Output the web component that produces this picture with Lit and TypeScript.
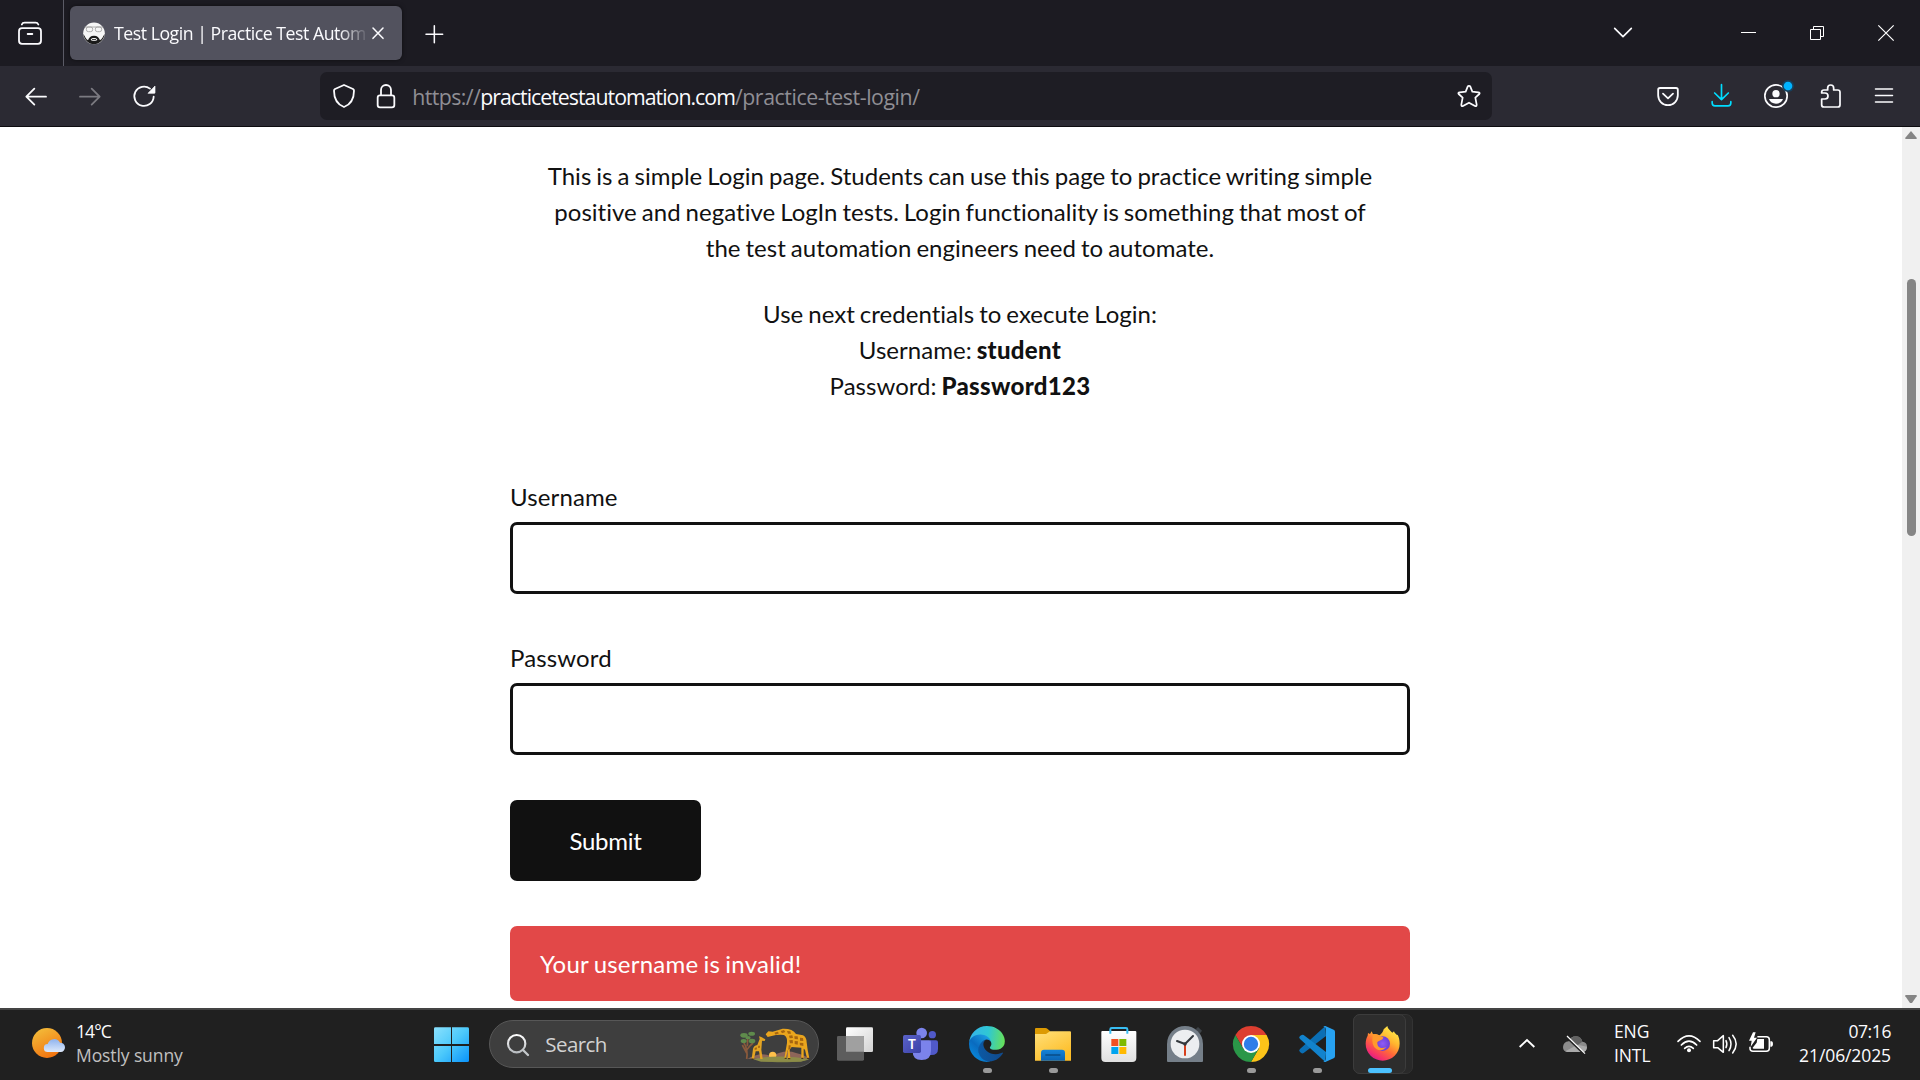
import { LitElement, html, css, svg, type TemplateResult } from "lit";
import { customElement } from "lit/decorators.js";

/* Icons are drawn on a grid of three units to the pixel. */
const pic = (x: number, y: number, w: number, h: number, body: TemplateResult) => html`
  <svg class="pic" width=${w / 3} height=${h / 3} viewBox="${x} ${y} ${w} ${h}" fill="none">${body}</svg>`;

const firefoxView = svg`<g stroke="#fbfbfe" stroke-width="5.4" stroke-linecap="round">
  <rect x="57" y="84.5" width="66" height="47" rx="9"/><path d="M65.5 73.5C67 69 70 68 74 68H107C111 68 113 69 115 73.5M83 102H97"/></g>`;
const closeTab = svg`<path d="M1119 84L1149 115M1149 84L1119 115" stroke="#fbfbfe" stroke-width="4.6" stroke-linecap="round"/>`;
const plus = svg`<path d="M1303 77V128M1278 102.5H1328" stroke="#fbfbfe" stroke-width="4.6" stroke-linecap="round"/>`;
const favicon = svg`<circle cx="282" cy="100" r="32.5" fill="#f6f6f6"/>
  <path d="M250 102C252 120 266 132.500 282 132.500S312 120 314 102C309 109 306 118 300 121C297 113 292 107 282 107S267 113 264 121C258 118 255 109 250 102Z" fill="#1b1b1b"/>
  <path d="M272 119C273 112 291 112 292 119C289 124 275 124 272 119Z" fill="#f0f0f0"/><path d="M276 119H288" stroke="#222" stroke-width="3"/>
  <g stroke="#9c9c9c" stroke-width="2.4"><path d="M254 81H310"/><rect x="259" y="81" width="19" height="14" rx="6"/><rect x="286" y="81" width="19" height="14" rx="6"/></g>`;
const chevDown = svg`<path d="M644 85L669 110L694 85" stroke="#fbfbfe" stroke-width="5"  stroke-linecap="round" stroke-linejoin="round"/>`;
const winMin = svg`<rect x="1023" y="96" width="45" height="3" fill="#fff"/>`;
const winRestore = svg`<path d="M1231.5 88.5H1261.5V118.5H1231.5ZM1240.5 88V79.5H1270.5V109.5H1262" stroke="#fff" stroke-width="3"/>`;
const winClose = svg`<path d="M1435 76L1481 122M1481 76L1435 122" stroke="#fff" stroke-width="3.6"/>`;

const back = svg`<path d="M138 290H80M103 266L79 290L103 314" stroke="#fbfbfe" stroke-width="5.4" stroke-linecap="round" stroke-linejoin="round"/>`;
const forward = svg`<path d="M240 290H298M275 266L299 290L275 314" stroke="#7b7a81" stroke-width="5.4" stroke-linecap="round" stroke-linejoin="round"/>`;
const reload = svg`<path d="M461 290A29 29 0 1 1 450 266" stroke="#fbfbfe" stroke-width="5.4" stroke-linecap="round"/><path d="M465 258V278Q465 280 463 280H444Z" fill="#fbfbfe" stroke="#fbfbfe" stroke-width="2" stroke-linejoin="round"/>`;
const shield = svg`<path d="M1032 255L1059 267Q1062 269 1062 272C1062 297 1052 313 1032 321C1012 313 1002 297 1002 272Q1002 269 1005 267Z" stroke="#fbfbfe" stroke-width="5.4" stroke-linejoin="round"/>`;
const lock = svg`<g stroke="#fbfbfe" stroke-width="5.4"><rect x="1133" y="286" width="50" height="36" rx="7"/><path d="M1143 286V270A15 15 0 0 1 1173 270V286"/></g>`;
const star = svg`<path d="M207 257.5Q210 257.5 211 260L217 275L235 277Q241 278 238 282L226 293L230 314Q230 320 225 318L207 308L189 318Q184 320 184 314L188 293L176 282Q173 278 179 277L197 275L203 260Q204 257.5 207 257.5Z" stroke="#fbfbfe" stroke-width="5.2" stroke-linejoin="round"/>`;
const pocket = svg`<g stroke="#fbfbfe" stroke-width="5.4" stroke-linecap="round" stroke-linejoin="round"><path d="M780 264H828Q833.5 264 833.5 269.5V286A29.5 29.5 0 0 1 774.5 286V269.5Q774.5 264 780 264Z"/><path d="M789 281L804 295L819 281"/></g>`;
const download = svg`<g stroke="#00ddff" stroke-width="5" stroke-linecap="round" stroke-linejoin="round"><path d="M964.5 254V298M944 279L964.5 299L985 279M936.5 305V309Q936.5 317.5 945 317.5H984Q992.5 317.5 992.5 309V305"/></g>`;
const account = svg`<circle cx="1128" cy="288" r="33.5" stroke="#fbfbfe" stroke-width="5"/><circle cx="1128" cy="281" r="11" fill="#fbfbfe"/><path d="M1107 297H1149C1146 306 1138 311 1128 311S1110 306 1107 297Z" fill="#fbfbfe"/><circle cx="1164" cy="258" r="18" fill="#16405d"/><circle cx="1164" cy="258" r="13" fill="#00b3ff"/>`;
const puzzle = svg`<path d="M1265 297H1275A9 9 0 0 0 1275 279H1265V277Q1265 270 1272 270H1283V264A9 9 0 0 1 1301 264V270H1313Q1320 270 1320 277V314Q1320 321 1313 321H1272Q1265 321 1265 314Z" stroke="#fbfbfe" stroke-width="5.2" stroke-linejoin="round"/>`;
const menu = svg`<path d="M1426.5 267H1477.5M1426.5 286.5H1477.5M1426.5 306H1477.5" stroke="#fbfbfe" stroke-width="4.6" stroke-linecap="round"/>`;
const scrollUp = svg`<path d="M1533 393L1550 413V417H1516V413Z" fill="#858585"/>`;
const scrollDown = svg`<path d="M1246 1025H1280V1029L1266 1049H1260L1246 1029Z" fill="#858585"/>`;

const weather = svg`<defs>
  <linearGradient id="sun" x1="0.2" y1="0" x2="0.7" y2="1"><stop offset="0" stop-color="#f3bd3a"/><stop offset="1" stop-color="#f1700e"/></linearGradient>
  <linearGradient id="cl" x1="0" y1="0" x2="0" y2="1"><stop offset="0" stop-color="#8fb3ee"/><stop offset="1" stop-color="#dde9fb"/></linearGradient></defs>
  <circle cx="141" cy="129" r="45" fill="url(#sun)"/>
  <path d="M144 156A12 12 0 0 1 143 132A20 20 0 0 1 180 128A14 14 0 0 1 182 156Z" fill="url(#cl)"/>`;
const start = svg`<defs><linearGradient id="w" gradientUnits="userSpaceOnUse" x1="1302" y1="82" x2="1406" y2="186"><stop offset="0" stop-color="#8be1fd"/><stop offset="0.5" stop-color="#4cc9fb"/><stop offset="1" stop-color="#0a93fb"/></linearGradient></defs>
  <path d="M1306 82H1353V132H1302V86Q1302 82 1306 82ZM1356 82H1402Q1407 82 1407 86V132H1356ZM1302 138H1353V186H1306Q1302 186 1302 182ZM1356 138H1407V182Q1407 186 1402 186H1356Z" fill="url(#w)"/>`;
const magnifier = svg`<defs><linearGradient id="mg" x1="0" y1="0" x2="0" y2="1"><stop offset="0" stop-color="#fff"/><stop offset="1" stop-color="#b9bdc1"/></linearGradient></defs>
  <circle cx="110" cy="128" r="26" stroke="url(#mg)" stroke-width="6.5"/><path d="M129 147L144 162" stroke="#c4c8cb" stroke-width="7" stroke-linecap="round"/>`;
const giraffes = svg`
  <ellipse cx="904" cy="178" rx="78" ry="10" fill="#7d8140"/><path d="M800 177Q840 154 870 170Q912 148 945 160Q975 168 985 177Z" fill="#8d6659"/>
  <circle cx="875" cy="167" r="11" fill="#ffc04a"/><path d="M815 178Q900 163 985 178L960 186H840Z" fill="#8c8c48"/>
  <path d="M797 178Q802 150 788 128M798 150Q806 138 816 130M797 160L784 136M799 140L800 118" stroke="#8a5a3c" stroke-width="5"/>
  <g fill="#5f8b4c"><ellipse cx="789" cy="107" rx="11" ry="7"/><ellipse cx="812" cy="102" rx="10" ry="6"/><ellipse cx="788" cy="124" rx="9" ry="6"/><ellipse cx="813" cy="124" rx="10" ry="7"/><ellipse cx="801" cy="114" rx="8" ry="5"/></g>
  <path d="M812 178L816 148Q818 138 829 136L836 118L834 110L841 112L853 119L851 124L843 123L841 150L845 178H838L834 155H824L819 178Z" fill="#e3a423"/>
  <path d="M854 104L862 95L875 96L905 87Q935 86 945 103L966 107Q976 111 977 128L980 150L985 176H978L972 150L968 147V176H961V144L932 142L926 150L928 177H920L921 150L914 176H910L918 130Q920 112 909 106Q890 104 872 109L860 112Z" fill="#eaa51d"/>
  <path d="M880 99L890 96L894 101L884 105ZM899 94L909 91L913 97L903 101ZM918 94L928 95L930 102L921 102ZM924 108L934 107L936 115L926 116ZM940 110L950 110L951 119L941 118ZM925 122L935 121L936 131L927 131ZM941 124L951 125L950 135L941 133ZM957 114L966 115L967 124L957 123ZM956 129L967 130L967 139L957 137ZM923 137L929 137L928 148L922 150ZM821 145L827 143L828 149L821 151ZM832 138L837 138L836 145L831 144Z" fill="#a66510"/>
  <path d="M911 176H917M921 177H928M961 176H967M978 176H985M812 178H818" stroke="#3c2413" stroke-width="3"/>`;
const taskView = svg`<defs><linearGradient id="tv" x1="0" y1="0" x2="1" y2="1"><stop offset="0" stop-color="#fff"/><stop offset="1" stop-color="#d2d2d2"/></linearGradient></defs>
  <rect x="1098" y="82" width="81" height="74" rx="4" fill="url(#tv)"/><rect x="1071" y="108" width="81" height="74" rx="4" fill="#5d5d5d"/><path d="M1098 108H1149Q1152 108 1152 111V155H1098Z" fill="#a0a0a0"/>`;
const teams = svg`<defs><linearGradient id="tm" x1="0" y1="0" x2="1" y2="1"><stop offset="0" stop-color="#5a62c8"/><stop offset="1" stop-color="#3c42a8"/></linearGradient></defs>
  <circle cx="1357" cy="104" r="11" fill="#5059c9"/><path d="M1350 121H1368Q1374 121 1374 127V147Q1374 165 1354 165H1346Z" fill="#5059c9"/>
  <circle cx="1325" cy="99" r="16" fill="#7b83eb"/><path d="M1298 121H1348Q1353 121 1353 127V152Q1353 180 1325 180T1298 152Z" fill="#7b83eb"/>
  <rect x="1269" y="105" width="54" height="54" rx="5" fill="url(#tm)"/><text x="1296" y="146" text-anchor="middle" font-family="Lato, sans-serif" font-weight="700" font-size="39" fill="#fff">T</text>`;
const edge = svg`<defs>
  <linearGradient id="e1" x1="64" y1="177" x2="241" y2="177" gradientUnits="userSpaceOnUse"><stop offset="0" stop-color="#0c59a4"/><stop offset="1" stop-color="#114a8b"/></linearGradient>
  <linearGradient id="e2" x1="160" y1="100" x2="46" y2="223" gradientUnits="userSpaceOnUse"><stop offset="0" stop-color="#1b9de2"/><stop offset="0.6" stop-color="#0a6bbf"/><stop offset="1" stop-color="#0883d6"/></linearGradient>
  <linearGradient id="e3" x1="10" y1="90" x2="250" y2="120" gradientUnits="userSpaceOnUse"><stop offset="0" stop-color="#35b5e8"/><stop offset="0.5" stop-color="#2fc7d4"/><stop offset="1" stop-color="#66e05a"/></linearGradient></defs>
  <g transform="translate(87 78) scale(.42)">
  <path fill="url(#e1)" d="M235.68 190.72a91.35 91.35 0 0 1-10.45 4.67 101.28 101.28 0 0 1-35.51 6.39c-46.79 0-87.53-32.18-87.53-73.48a31.07 31.07 0 0 1 16.27-27c-42.35 1.78-53.23 45.9-53.23 71.76 0 73.12 67.37 80.52 81.9 80.52 7.85 0 19.67-2.28 26.76-4.52l1.3-.44a128.34 128.34 0 0 0 66.63-52.78 4 4 0 0 0-5.38-5.71z"/>
  <path fill="url(#e2)" d="M105.73 241.42a79.17 79.17 0 0 1-22.74-21.34 80.72 80.72 0 0 1 29.5-120c3.12-1.47 8.45-4.14 15.54-4a32.35 32.35 0 0 1 25.69 13 31.88 31.88 0 0 1 6.36 18.66c0-.21 24.46-79.6-80-79.6-43.9 0-80 41.66-80 78.21a130.15 130.15 0 0 0 12.1 56 128 128 0 0 0 156.4 67.05 75.55 75.55 0 0 1-62.78-8z"/>
  <path fill="url(#e3)" d="M152.29 148.86c-.81 1.06-3.3 2.51-3.3 5.66 0 2.61 1.7 5.11 4.72 7.23 14.38 10 41.49 8.67 41.56 8.67a59.56 59.56 0 0 0 30.27-8.35 61.38 61.38 0 0 0 30.43-52.88c.26-22.41-8-37.31-11.34-43.91-21.19-41.45-66.93-65.28-116.67-65.28a128 128 0 0 0-128 126.2c.48-36.54 36.8-66.05 80-66.05 3.5 0 23.46.34 42 10.07 16.34 8.58 24.9 18.94 30.85 29.21 6.18 10.67 7.28 24.15 7.28 29.52s-2.74 13.33-7.8 19.91z"/></g>`;
const folder = svg`<defs><linearGradient id="f1" x1="0" y1="0" x2="0.6" y2="1"><stop offset="0" stop-color="#ffe07a"/><stop offset="1" stop-color="#fdbd27"/></linearGradient><linearGradient id="f2" x1="0" y1="0" x2="0" y2="1"><stop offset="0" stop-color="#1583d8"/><stop offset="1" stop-color="#0a63b4"/></linearGradient></defs>
  <path d="M285 87Q285 84 288 84H316Q320 84 323 87L330 93V106H285Z" fill="#dc9a02"/>
  <path d="M285 102H318L330 94H390Q393 94 393 97V182H285Z" fill="url(#f1)"/><path d="M303 182V158Q303 149 312 149H366Q375 149 375 158V182Z" fill="url(#f2)"/><path d="M316 165H361" stroke="#08477f" stroke-width="4"/>`;
const store = svg`<defs><linearGradient id="s1" x1="0" y1="0" x2="0" y2="1"><stop offset="0" stop-color="#fff"/><stop offset="1" stop-color="#e0e0e0"/></linearGradient></defs>
  <path d="M483 96Q483 93 486 93H585Q588 93 588 96V174Q588 186 576 186H495Q483 186 483 174Z" fill="url(#s1)"/><path d="M510 101V88Q510 84 514 84H557Q561 84 561 88V101" stroke="#38bdf2" stroke-width="6"/>
  <rect x="513" y="117" width="21" height="21" fill="#f25022"/><rect x="537" y="117" width="21" height="21" fill="#7fba00"/><rect x="513" y="141" width="21" height="21" fill="#00a4ef"/><rect x="537" y="141" width="21" height="21" fill="#ffb900"/>`;
const clock = svg`<path d="M767 88L774 81L786 92L779 101Z" fill="#3d4247"/><path d="M681 132A54 54 0 0 1 789 132V183Q789 186 786 186H684Q681 186 681 183Z" fill="#757f89"/><circle cx="735" cy="132" r="43" fill="#eceef0"/>
  <path d="M735 132V165" stroke="#d8401c" stroke-width="6" stroke-linecap="round"/><path d="M711 123L735 132L759 108" stroke="#33383d" stroke-width="6" stroke-linecap="round"/><circle cx="735" cy="132" r="5" fill="#33383d"/>`;
const chrome = svg`<g transform="translate(933 132)"><path d="M-46.8 -27A54 54 0 0 1 46.8 -27H0L-23.4 13.5Z" fill="#dd3e30"/><path d="M46.8 -27A54 54 0 0 1 0 54L23.4 13.5L0 -27Z" fill="#fcc419"/><path d="M-46.8 -27A54 54 0 0 0 0 54L23.4 13.5H-23.4Z" fill="#2a9748"/><circle r="27" fill="#fff"/><circle r="21.5" fill="#2f7de9"/></g>`;
const vscode = svg`<path d="M1156 78L1080 147Q1075 151 1080 156L1085 160Q1088 161 1091 159L1158 108Z" fill="#0b6fb5"/><path d="M1085 105L1080 108Q1075 112 1080 117L1156 186L1158 156L1091 105Q1088 103 1085 105Z" fill="#1283cd"/><path d="M1156 78L1181 89Q1185 91 1185 95V169Q1185 173 1181 175L1156 186Q1152 186 1150 183Q1158 184 1158 176V88Q1158 80 1150 81Q1152 78 1156 78Z" fill="#27a2f2"/>`;
const firefox = svg`<defs><linearGradient id="ff" x1="0.85" y1="0.05" x2="0.25" y2="1"><stop offset="0" stop-color="#fff04d"/><stop offset="0.35" stop-color="#ffb52e"/><stop offset="0.6" stop-color="#ff6b37"/><stop offset="0.85" stop-color="#f6316a"/><stop offset="1" stop-color="#d6188f"/></linearGradient><radialGradient id="fp"><stop offset="0" stop-color="#8f5cf7"/><stop offset="1" stop-color="#6a3fd6"/></radialGradient></defs>
  <path d="M1343 78C1344 86 1352 92 1358 98L1363 94C1364 100 1370 102 1372 106L1374 104C1378 112 1380 120 1380 131A51 51 0 0 1 1278 131C1278 120 1281 112 1284 107L1285 99L1291 102L1296 94L1300 103Q1310 101 1317 105C1322 108 1330 96 1332 88C1336 84 1340 81 1343 78Z" fill="url(#ff)"/>
  <circle cx="1329" cy="131" r="22" fill="url(#fp)"/><path d="M1300 103Q1312 101 1320 108L1331 112Q1331 119 1319 122L1313 126Q1312 140 1322 143Q1332 146 1340 140Q1328 156 1311 148Q1293 138 1300 103Z" fill="#ff9a2c"/>`;

const trayUp = svg`<path d="M89 201L111 180L133 201" stroke="#fff" stroke-width="5.5"/>`;
const oneDrive = svg`<path d="M232 216Q219 215 219 201Q220 186 236 184Q242 169 258 169Q273 170 277 185Q291 187 291 200Q290 216 277 216Z" fill="#8c8c8c"/><path d="M240 180Q247 168 259 168Q273 170 277 185L262 196Z" fill="#626262"/><path d="M226 214L262 194L291 200Q290 216 277 216H232Z" fill="#aaa"/><path d="M230 172L283 223" stroke="#202020" stroke-width="6"/><path d="M231 168L285 221" stroke="#fff" stroke-width="3.6"/>`;
const wifi = svg`<g stroke="#fff" stroke-width="5" stroke-linecap="round"><path d="M564 184Q597 151 630 184M574 195Q597 172 620 195M584 205Q597 193 610 205"/></g><circle cx="597" cy="211" r="6" fill="#fff"/>`;
const speaker = svg`<g stroke="#fff" stroke-width="4.6" stroke-linecap="round" stroke-linejoin="round"><path d="M671 182H683L700 167V217L683 203H671ZM708 182Q713 192 708 203M717 173Q729 192 717 212M728 166Q749 192 728 219"/></g>`;
const battery = svg`<path d="M802 170H829Q838 170 838 179V205Q838 214 829 214H789Q780 214 780 205V200" stroke="#fff" stroke-width="4.6"/><path d="M802 177H822V206H792Q788 206 788 203L800 188Z" fill="#fff"/><path d="M841 184H845Q849 185 849 192T845 200H841Z" fill="#fff"/><path d="M789 157L777 182H785L782 200L801 173H792L797 157Z" fill="#fff"/>`;

const apps: { x: number; art: TemplateResult; on?: boolean }[] = [
  { x: 42, art: edge, on: true },
  { x: 240, art: folder, on: true },
  { x: 437, art: store },
  { x: 636, art: clock },
  { x: 834, art: chrome, on: true },
  { x: 1032, art: vscode, on: true },
];

@customElement("app-root")
export class AppRoot extends LitElement {
  static styles = css`
    :host { display: flex; flex-direction: column; width: 1920px; height: 1080px; overflow: hidden; background: #fff;
      font-family: "Open Sans", "Noto Sans", sans-serif; color: #fbfbfe; }
    * { box-sizing: border-box; }
    .pic { display: block; flex: none; overflow: visible; }
    .tabs { display: flex; height: 66px; background: #1c1b22; flex: none; }
    .view { width: 64px; border-right: 1px solid #5b5b66; }
    .tab { display: flex; width: 332px; height: 54px; margin: 6px 0 0 6px; border-radius: 6px; background: #52525e; box-shadow: 0 0 4px rgba(0,0,0,.5); }
    .title { width: 256px; flex: none; white-space: nowrap; font-size: 17.7px; line-height: 55px; padding-left: 1px; letter-spacing: -.47px;
      -webkit-mask-image: linear-gradient(90deg, #000 226px, transparent 256px); mask-image: linear-gradient(90deg, #000 226px, transparent 256px); }
    .grow { flex: 1; }
    .gap { width: 68px; }
    .nav { display: flex; height: 61px; background: #2b2a33; border-bottom: 1px solid #0d0c10; flex: none; padding: 0 9px; }
    .url { display: flex; width: 1172px; height: 48px; margin: 6px 149px 0 149px; border-radius: 7px; background: #1e1d24; white-space: nowrap; font-size: 21.3px; line-height: 49px; color: #8f8e94; letter-spacing: -.6px; }
    .link { flex: 1; display: flex; }
    .host { color: #fbfbfe; letter-spacing: -.98px; }
    .path { letter-spacing: -.43px; }
    .body { display: flex; flex: 1; min-height: 0; }
    .page { flex: 1; padding: 31px 0 0 510px; font: 24px/36px Lato, sans-serif; color: #111; font-variant-ligatures: none; word-spacing: -1.15px; }
    .intro { width: 900px; text-align: center; white-space: nowrap; letter-spacing: .02px; }
    .para { margin: 0 0 30px; }
    .strong { font-weight: 900; letter-spacing: .3px; }
    .field { display: block; width: 900px; height: 72px; border: 3px solid #111; border-radius: 7px; background: #fff; margin: 0; outline: 0; }
    .label { display: block; padding-bottom: 7px; letter-spacing: .13px; }
    .form { padding-top: 45px; }
    .second { padding-top: 46px; }
    .submit { display: block; width: 191px; height: 81px; margin: 45px 0; border: 0; border-radius: 7px; background: #111; color: #fff; font: inherit; padding: 0; letter-spacing: -.3px; }
    .error { width: 900px; height: 75px; border-radius: 7px; background: #e24848; color: #fff; padding: 20px 30px; letter-spacing: .22px; }
    .scroll { display: flex; flex-direction: column; align-items: center; width: 18px; background: #f0f0f0; }
    .thumb { width: 9px; height: 257px; border-radius: 5px; background: #858585; margin-top: 134px; }
    .bar { display: flex; flex: none; height: 72px; border-top: 2px solid #444; background: #202020; font-size: 17.5px; line-height: 24px; white-space: nowrap; letter-spacing: -.1px; }
    .two { display: flex; flex-direction: column; padding-top: 9px; }
    .weather { width: 342px; margin-left: -1px; }
    .temp { letter-spacing: -.9px; }
    .dim { color: #c0c0c0; }
    .lang { width: 77px; padding-left: 20px; }
    .search { display: flex; width: 330px; height: 48px; margin: 10px 3px 0 4px; border: 1.5px solid #575757; border-radius: 24px; background: #3e3e3e; color: #d2d2d2; font-size: 20.5px; line-height: 46px; letter-spacing: -.6px; }
    .hint { margin-left: 1px; }
    .app { display: flex; flex-direction: column; align-items: center; width: 66px; }
    .dot { width: 9px; height: 5px; border-radius: 3px; background: #9a9a9a; }
    .active { width: 24px; background: #4cc2ff; }
    .stack { width: 60px; height: 60px; margin: 4px 0 0 3px; border-radius: 7px; background: #292929; border: 1px solid #333; }
    .front { display: flex; flex-direction: column; align-items: center; width: 53px; height: 60px; margin: -1px; border-radius: 7px; background: #2d2d2d; border: 1px solid #3c3c3c; }
    .clock { width: 141px; align-items: flex-end; padding-right: 29px; }
    .time { letter-spacing: -.4px; }
  `;
  render() {
    return html`
      <div class="tabs">
        <div class="view">${pic(0, 0, 189, 198, firefoxView)}</div>
        <div class="tab">${pic(210, 18, 129, 162, favicon)}<div class="title">Test Login | Practice Test Autom</div>${pic(1107, 18, 99, 162, closeTab)}</div>
        ${pic(1206, 0, 198, 198, plus)}<div class="grow"></div>
        ${pic(600, 0, 138, 198, chevDown)}<div class="gap"></div>
        ${pic(942, 0, 207, 198, winMin)}${pic(1149, 0, 207, 198, winRestore)}${pic(1356, 0, 204, 198, winClose)}
      </div>
      <div class="nav">
        ${pic(27, 198, 162, 180, back)}${pic(189, 198, 162, 180, forward)}${pic(351, 198, 162, 180, reload)}
        <div class="url">${pic(960, 216, 144, 144, shield)}${pic(1104, 216, 133, 144, lock)}
          <div class="link"><span>https://</span><span class="host">practicetestautomation.com</span><span class="path">/practice-test-login/</span></div>${pic(138, 216, 138, 144, star)}</div>
        ${pic(723, 198, 162, 180, pocket)}${pic(885, 198, 162, 180, download)}${pic(1047, 198, 162, 180, account)}${pic(1209, 198, 162, 180, puzzle)}${pic(1371, 198, 162, 180, menu)}
      </div>
      <div class="body">
        <main class="page">
          <div class="intro">
            <p class="para">This is a simple Login page. Students can use this page to practice writing simple<br>positive and negative LogIn tests. Login functionality is something that most of<br>the test automation engineers need to automate.</p>
            <p class="para">Use next credentials to execute Login:<br>Username: <b class="strong">student</b><br>Password: <b class="strong">Password123</b></p>
          </div>
          <div class="form">
            <label class="label">Username</label><input class="field">
            <label class="label second">Password</label><input class="field" type="password">
            <button class="submit">Submit</button>
            <div class="error">Your username is invalid!</div>
          </div>
        </main>
        <div class="scroll">${pic(1506, 381, 54, 54, scrollUp)}<div class="thumb"></div><div class="grow"></div>${pic(1236, 1010, 54, 54, scrollDown)}</div>
      </div>
      <div class="bar">
        ${pic(0, 30, 231, 210, weather)}
        <div class="two weather"><span class="temp">14°C</span><span class="dim">Mostly sunny</span></div>
        ${pic(1254, 30, 201, 210, start)}
        <div class="search">${pic(30, 60, 163, 140, magnifier)}<span class="hint">Search</span><div class="grow"></div>${pic(762, 64, 250, 140, giraffes)}</div>
        ${pic(1026, 30, 198, 210, taskView)}${pic(1224, 30, 198, 210, teams)}
        ${apps.map((a) => html`<div class="app">${pic(a.x, 30, 198, 174, a.art)}${a.on ? html`<div class="dot"></div>` : ""}</div>`)}
        <div class="stack"><div class="front">${pic(1240, 45, 158, 159, firefox)}<div class="dot active"></div></div></div>
        <div class="grow"></div>
        ${pic(54, 90, 144, 210, trayUp)}${pic(198, 90, 114, 210, oneDrive)}
        <div class="two lang"><span>ENG</span><span>INTL</span></div>
        ${pic(543, 90, 108, 210, wifi)}${pic(651, 90, 108, 210, speaker)}${pic(759, 90, 108, 210, battery)}
        <div class="two clock"><span class="time">07:16</span><span>21/06/2025</span></div>
      </div>`;
  }
}
